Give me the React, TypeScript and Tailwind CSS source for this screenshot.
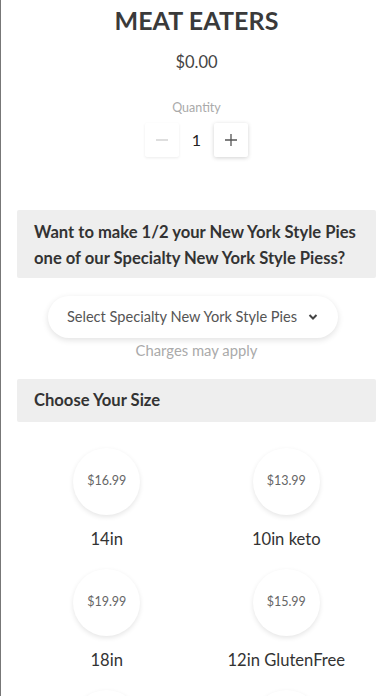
import React from "react";

const sizes = [
  { price: "$16.99", label: "14in" },
  { price: "$13.99", label: "10in keto" },
  { price: "$19.99", label: "18in" },
  { price: "$15.99", label: "12in GlutenFree" },
];

export default function App() {
  return (
    <div
      className="w-[392px] h-[696px] overflow-hidden bg-white border-l border-[#777] relative"
      style={{ fontFamily: "Lato, 'Open Sans', sans-serif" }}
    >
      <div className="flex flex-col items-center pt-[5px]">
        <h1 className="text-[25px] leading-[30px] font-bold text-[#3a3a3a] tracking-[0.1px]">MEAT EATERS</h1>
        <div className="mt-[17px] text-[16.5px] leading-[20px] text-[#444]">$0.00</div>
        <div className="mt-[29px] text-[12.5px] leading-[14px] text-[#aaa]">Quantity</div>
        <div className="mt-[8px] flex items-center gap-[13px]">
          <button className="w-[34px] h-[34px] bg-white rounded-[2px] shadow-[0_1px_3px_rgba(0,0,0,0.08)] flex items-center justify-center">
            <svg width="16" height="16" viewBox="0 0 16 16"><path d="M2 8h12" stroke="#ccc" strokeWidth="1.3" /></svg>
          </button>
          <span className="text-[16px] text-[#222]">1</span>
          <button className="w-[34px] h-[34px] bg-white rounded-[2px] shadow-[0_1px_4px_rgba(0,0,0,0.18)] flex items-center justify-center">
            <svg width="16" height="16" viewBox="0 0 16 16"><path d="M2 8h12M8 2v12" stroke="#555" strokeWidth="1.3" /></svg>
          </button>
        </div>
      </div>

      <div className="mx-[16px] mt-[53px] bg-[#eeeeee] rounded-[2px] px-[17px] pt-[9px] pb-[7px]">
        <p className="text-[16.6px] leading-[26px] font-bold text-[#333]">
          Want to make 1/2 your New York Style Pies one of our Specialty New York Style Piess?
        </p>
      </div>

      <div className="flex flex-col items-center mt-[18px]">
        <button className="mr-[8px] h-[42px] w-[290px] rounded-full bg-white shadow-[0_2px_6px_rgba(0,0,0,0.12)] flex items-center justify-center gap-[11px] text-[14.6px] text-[#555]">
          <span>Select Specialty New York Style Pies</span>
          <svg width="10" height="8" viewBox="0 0 10 8"><path d="M1.5 2l3.5 3.5L8.5 2" stroke="#444" strokeWidth="2" fill="none" /></svg>
        </button>
        <div className="mt-[3px] text-[14.8px] leading-[18px] text-[#aaa]">Charges may apply</div>
      </div>

      <div className="mx-[16px] mt-[20px] bg-[#eeeeee] rounded-[2px] px-[17px] h-[43px] flex items-center">
        <span className="text-[16.6px] font-bold text-[#333]">Choose Your Size</span>
      </div>

      <div className="mx-[16px] grid grid-cols-2 gap-y-[18px] mt-[26px]">
        {sizes.map((s, i) => (
          <div key={i} className="flex flex-col items-center">
            <div className="w-[67px] h-[67px] rounded-full bg-white shadow-[0_2px_5px_rgba(0,0,0,0.1)] flex items-center justify-center text-[12.5px] text-[#666]">
              {s.price}
            </div>
            <div className="mt-[12px] text-[16.6px] leading-[24px] text-[#333]">{s.label}</div>
          </div>
        ))}
        <div className="flex flex-col items-center">
          <div className="w-[67px] h-[67px] rounded-full bg-white shadow-[0_2px_5px_rgba(0,0,0,0.1)]" />
        </div>
        <div className="flex flex-col items-center">
          <div className="w-[67px] h-[67px] rounded-full bg-white shadow-[0_2px_5px_rgba(0,0,0,0.1)]" />
        </div>
      </div>
    </div>
  );
}
